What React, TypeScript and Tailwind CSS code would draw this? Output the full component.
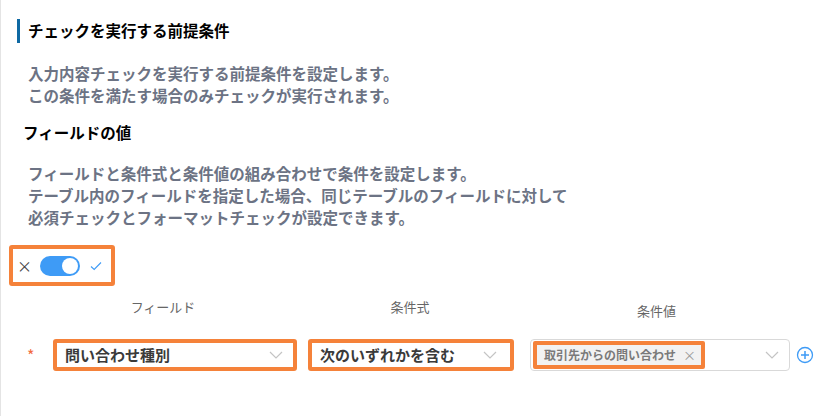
import React from "react";

const Chevron = () => (
  <svg width="14" height="8" viewBox="0 0 14 8" fill="none" className="shrink-0">
    <path d="M1 1l6 6 6-6" stroke="#c4c4c4" strokeWidth="1.2" />
  </svg>
);

const Desc = ({ lines, className = "" }: { lines: string[]; className?: string }) => (
  <div className={`pl-[27px] text-[15.5px] leading-[22px] font-bold text-[#6c7384] ${className}`}>
    {lines.map((l) => (
      <div key={l}>{l}</div>
    ))}
  </div>
);

export default function App() {
  return (
    <div className="h-[416px] w-[831px] border-l border-[#e4e4e4] bg-white font-['Noto_Sans_CJK_JP','Noto_Sans',sans-serif] overflow-hidden">
      <div className="pt-[19px] pl-[16px]">
        {/* 前提条件 heading */}
        <div className="flex h-[24px] items-center border-l-[3px] border-[#0f69a3] pl-[8px] text-[15.5px] font-bold text-black">
          チェックを実行する前提条件
        </div>
      </div>
      <Desc
        className="mt-[19px]"
        lines={[
          "入力内容チェックを実行する前提条件を設定します。",
          "この条件を満たす場合のみチェックが実行されます。",
        ]}
      />

      <div className="mt-[15px] pl-[22px] text-[15.5px] leading-[22px] font-bold text-black">フィールドの値</div>
      <Desc
        className="mt-[19px]"
        lines={[
          "フィールドと条件式と条件値の組み合わせで条件を設定します。",
          "テーブル内のフィールドを指定した場合、同じテーブルのフィールドに対して",
          "必須チェックとフォーマットチェックが設定できます。",
        ]}
      />

      {/* toggle */}
      <div className="mt-[17px] ml-[8px] flex h-[41px] w-[106px] items-center rounded-[3px] border-[4px] border-[#f5823a] pl-[4px]">
        <span className="text-[15px] leading-none text-[#444]">×</span>
        <div className="ml-[8px] flex h-[20px] w-[40px] items-center justify-end rounded-full bg-[#3e9bf6] pr-[2px]">
          <div className="h-[16px] w-[16px] rounded-full bg-white" />
        </div>
        <svg width="12" height="10" viewBox="0 0 12 10" className="ml-[10px]">
          <path d="M1 5.5l3.2 3L11 1.5" stroke="#3e9bf6" strokeWidth="1.1" fill="none" />
        </svg>
      </div>

      {/* column labels */}
      <div className="mt-[11px] flex pl-[29px] text-[13px] leading-[20px] text-[#666]">
        <div className="w-[266px] text-center">フィールド</div>
        <div className="ml-[11px] w-[206px] text-center">条件式</div>
        <div className="ml-[19px] mt-[4px] w-[257px] pr-[8px] text-center">条件値</div>
      </div>

      {/* condition row */}
      <div className="mt-[18px] flex items-center pl-[26px]">
        <span className="w-[26px] text-[16px] text-[#f26a3e]">*</span>
        <div className="flex h-[32px] w-[244px] items-center justify-between rounded-[3px] border-[4px] border-[#f5823a] pl-[8px] pr-[10px] text-[15px] font-bold text-[#3a3a3a]">
          問い合わせ種別
          <Chevron />
        </div>
        <div className="ml-[11px] flex h-[32px] w-[206px] items-center justify-between rounded-[3px] border-[4px] border-[#f5823a] pl-[8px] pr-[13px] text-[15px] font-bold text-[#3a3a3a]">
          次のいずれかを含む
          <Chevron />
        </div>
        <div className="ml-[16px] flex h-[32px] w-[260px] items-center justify-between rounded-[4px] border border-[#d9d9d9] pl-[2px] pr-[10px]">
          <div className="flex h-[28px] items-center rounded-[2px] border-[4px] border-[#f5823a] bg-[#f2f2f2] pl-[7px] pr-[5px] text-[12px] font-bold text-[#7a7a7a]">
            取引先からの問い合わせ
            <span className="ml-[7px] text-[13px] font-normal text-[#999]">×</span>
          </div>
          <Chevron />
        </div>
        <svg width="18" height="18" viewBox="0 0 18 18" className="ml-[6px]">
          <circle cx="9" cy="9" r="7.5" stroke="#3e9bf6" strokeWidth="1.3" fill="none" />
          <path d="M9 5v8M5 9h8" stroke="#3e9bf6" strokeWidth="1.5" />
        </svg>
      </div>
    </div>
  );
}
